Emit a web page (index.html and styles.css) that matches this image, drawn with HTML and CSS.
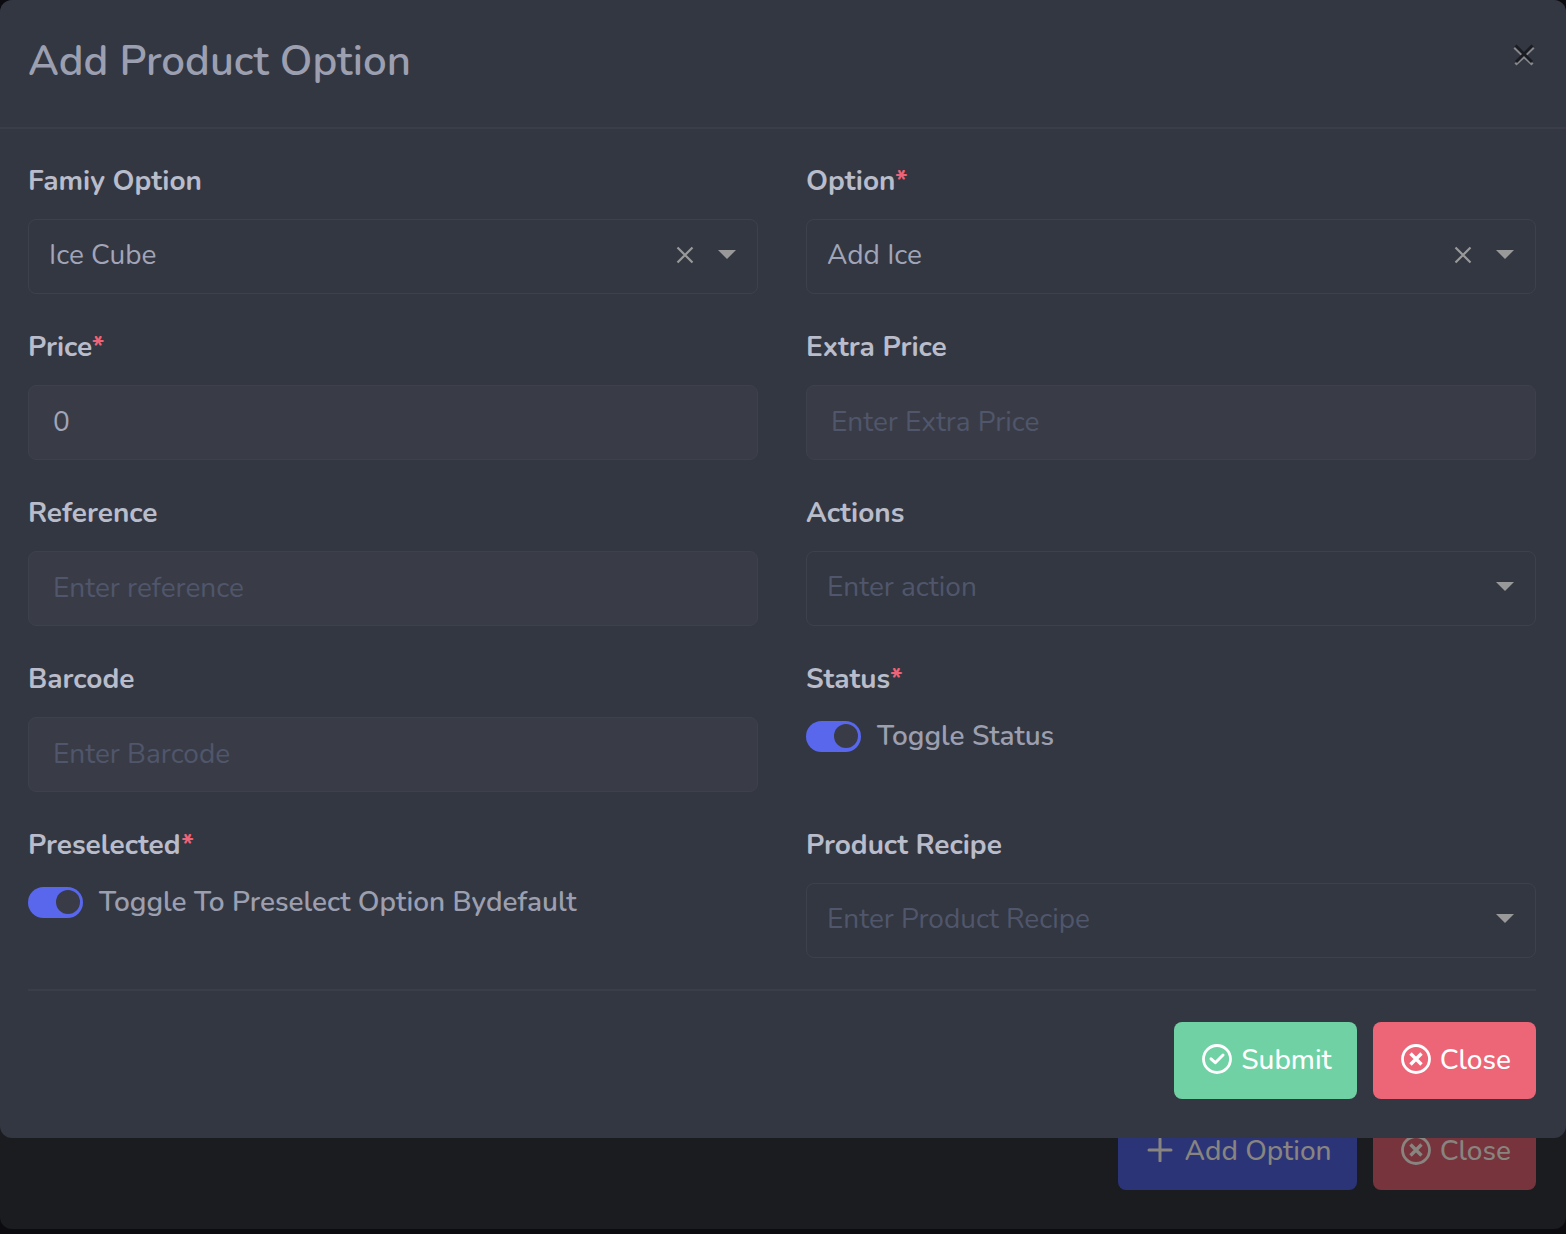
FILE: index.html
```html
<!DOCTYPE html>
<html lang="en">
<head>
<meta charset="utf-8">
<meta name="viewport" content="width=device-width, initial-scale=1">
<title>Add Product Option</title>
<link rel="stylesheet" href="styles.css">
</head>
<body>
<svg class="sprite" aria-hidden="true">
  <symbol id="icon-clear" viewBox="0 0 18 18"><path d="M1.500 1.500 16.500 16.500M16.500 1.500 1.500 16.500" fill="none" stroke="currentColor" stroke-width="2.200"/></symbol>
  <symbol id="icon-caret" viewBox="0 0 18 9"><path d="M0 0H18L9 9Z" fill="currentColor"/></symbol>
  <symbol id="icon-check" viewBox="0 0 30 30"><circle cx="15" cy="15" r="13.500" fill="none" stroke="currentColor" stroke-width="2.800"/><path d="M9 14.800 13.300 18.700 21 11" fill="none" stroke="currentColor" stroke-width="3" stroke-linecap="round" stroke-linejoin="round"/></symbol>
  <symbol id="icon-cross" viewBox="0 0 30 30"><circle cx="15" cy="15" r="13.500" fill="none" stroke="currentColor" stroke-width="2.800"/><path d="M9.500 9.500 20.500 20.500M20.500 9.500 9.500 20.500" fill="none" stroke="currentColor" stroke-width="3.400"/></symbol>
  <symbol id="icon-plus" viewBox="0 0 24 24"><path d="M12 1V23M1 12H23" fill="none" stroke="currentColor" stroke-width="3" stroke-linecap="round"/></symbol>
</svg>

<div class="stage">
  <section class="dialog dialog-back" aria-hidden="true">
    <footer class="actions">
      <button class="btn btn-primary" type="button" tabindex="-1"><svg class="plus"><use href="#icon-plus"/></svg>Add Option</button>
      <button class="btn btn-danger" type="button" tabindex="-1"><svg class="icon"><use href="#icon-cross"/></svg>Close</button>
    </footer>
  </section>

  <section class="dialog dialog-front" role="dialog" aria-labelledby="title">
    <header class="header">
      <h1 class="title" id="title">Add Product Option</h1>
      <button class="dismiss" type="button" aria-label="Close dialog">
        <svg class="dismiss-icon" viewBox="0 0 24 24"><path class="dismiss-glow" d="M2.500 5.500 20.500 22.500M21.500 5.500 3.500 22.500"/><path class="dismiss-mark" d="M3.500 3.500 20 20M20.500 3.500 4 20"/></svg>
      </button>
    </header>

    <form class="form">
      <div class="fields">
        <div class="field">
          <label class="label" for="family">Famiy Option</label>
          <div class="picker">
            <select class="control select" id="family"><option>Ice Cube</option></select>
            <div class="picker-icons">
              <button class="clear" type="button" aria-label="Clear family option"><svg class="clear-icon"><use href="#icon-clear"/></svg></button>
              <svg class="caret"><use href="#icon-caret"/></svg>
            </div>
          </div>
        </div>
        <div class="field">
          <label class="label" for="option">Option<span class="required">*</span></label>
          <div class="picker">
            <select class="control select" id="option"><option>Add Ice</option></select>
            <div class="picker-icons">
              <button class="clear" type="button" aria-label="Clear option"><svg class="clear-icon"><use href="#icon-clear"/></svg></button>
              <svg class="caret"><use href="#icon-caret"/></svg>
            </div>
          </div>
        </div>
        <div class="field">
          <label class="label" for="price">Price<span class="required">*</span></label>
          <input class="control input" id="price" type="text" inputmode="decimal" value="0">
        </div>
        <div class="field">
          <label class="label" for="extra">Extra Price</label>
          <input class="control input" id="extra" type="text" inputmode="decimal" placeholder="Enter Extra Price">
        </div>
        <div class="field">
          <label class="label" for="reference">Reference</label>
          <input class="control input" id="reference" type="text" placeholder="Enter reference">
        </div>
        <div class="field">
          <label class="label" for="actions">Actions</label>
          <div class="picker">
            <select class="control select empty" id="actions"><option value="">Enter action</option></select>
            <div class="picker-icons"><svg class="caret"><use href="#icon-caret"/></svg></div>
          </div>
        </div>
        <div class="field">
          <label class="label" for="barcode">Barcode</label>
          <input class="control input" id="barcode" type="text" placeholder="Enter Barcode">
        </div>
        <div class="field">
          <span class="label">Status<span class="required">*</span></span>
          <label class="toggle"><input class="switch" type="checkbox" role="switch" checked>Toggle Status</label>
        </div>
        <div class="field">
          <span class="label">Preselected<span class="required">*</span></span>
          <label class="toggle"><input class="switch" type="checkbox" role="switch" checked>Toggle To Preselect Option Bydefault</label>
        </div>
        <div class="field">
          <label class="label" for="recipe">Product Recipe</label>
          <div class="picker">
            <select class="control select empty" id="recipe"><option value="">Enter Product Recipe</option></select>
            <div class="picker-icons"><svg class="caret"><use href="#icon-caret"/></svg></div>
          </div>
        </div>
      </div>
      <footer class="actions actions-ruled">
        <button class="btn btn-success" type="submit"><svg class="icon"><use href="#icon-check"/></svg>Submit</button>
        <button class="btn btn-danger" type="button"><svg class="icon"><use href="#icon-cross"/></svg>Close</button>
      </footer>
    </form>
  </section>
</div>
</body>
</html>
```
FILE: styles.css
```css
* {
  box-sizing: border-box;
}

body {
  margin: 0;
  min-height: 100vh;
  background: #0c0c10;
  color: #a1a5b7;
  font-family: Nunito, Lato, "Noto Sans", sans-serif;
  font-size: 28px;
  line-height: 40px;
}

button,
input,
select {
  font: inherit;
  color: inherit;
}

.sprite {
  display: none;
}

/* Both dialogs share one cell, so the front one covers the back one. */
.stage {
  display: grid;
}

.dialog {
  grid-area: 1 / 1;
  min-width: 0;
  border-radius: 12px;
}

.dialog-back {
  display: flex;
  flex-direction: column;
  justify-content: flex-end;
  padding: 0 30px 39px 28px;
  background: #1b1c20;
}

.dialog-front {
  z-index: 1;
  margin-bottom: 91px;
  background: #333741;
}

.header {
  display: flex;
  justify-content: space-between;
  align-items: flex-start;
  padding: 34px 30px 37px 28px;
  border-bottom: 2px solid #3b3e49;
}

.title {
  margin: 0;
  font-size: 42px;
  line-height: 56px;
  font-weight: 600;
  color: #9c9fb0;
}

.dismiss,
.clear {
  display: flex;
  padding: 0;
  border: 0;
  background: none;
  cursor: pointer;
}

.dismiss {
  margin-top: 8px;
}

.dismiss-icon {
  width: 24px;
  height: 24px;
  fill: none;
}

.dismiss-glow {
  stroke: #85878d;
  stroke-width: 3;
}

.dismiss-mark {
  stroke: #1b1c21;
  stroke-width: 3;
}

.form {
  padding: 32px 30px 39px 28px;
}

.fields {
  display: grid;
  grid-template-columns: 1fr 1fr;
  gap: 33px 48px;
}

.field {
  display: flex;
  flex-direction: column;
  gap: 18px;
  min-width: 0;
}

.label {
  font-weight: 700;
  color: #b9bcca;
}

.required {
  color: #ed6478;
}

.control {
  width: 100%;
  height: 75px;
  margin: 0;
  border: 1px solid #3d414c;
  border-radius: 8px;
}

.input {
  padding: 0 24px 2px;
  background: #393c46;
}

.input::placeholder {
  color: #50566b;
  opacity: 1;
}

.picker {
  display: grid;
  align-items: center;
}

.select {
  grid-area: 1 / 1;
  appearance: none;
  padding: 0 100px 4px 20px;
  background: transparent;
}

.empty {
  color: #50566b;
}

.picker-icons {
  grid-area: 1 / 1;
  justify-self: end;
  display: flex;
  align-items: center;
  gap: 24px;
  padding: 0 22px 4px 0;
  color: #999;
  pointer-events: none;
}

.clear {
  pointer-events: auto;
}

.clear-icon {
  width: 18px;
  height: 18px;
}

.caret {
  width: 18px;
  height: 9px;
}

.toggle {
  display: flex;
  align-items: center;
  gap: 16px;
  line-height: 38px;
  font-weight: 600;
  color: #9c9fb0;
}

.switch {
  appearance: none;
  flex: none;
  display: flex;
  justify-content: flex-end;
  align-items: center;
  width: 55px;
  height: 31px;
  margin: 0;
  padding: 3px;
  border-radius: 16px;
  background: #5867eb;
}

.switch::before {
  content: "";
  width: 24px;
  height: 24px;
  border-radius: 50%;
  background: #393c46;
}

.switch:not(:checked) {
  justify-content: flex-start;
  background: #50566b;
}

.actions {
  display: flex;
  justify-content: flex-end;
  gap: 16px;
}

.actions-ruled {
  margin-top: 31px;
  padding-top: 31px;
  border-top: 2px solid #3b3e49;
}

.btn {
  display: flex;
  align-items: center;
  gap: 9px;
  height: 77px;
  padding: 0 25px 2px 28px;
  border: 0;
  border-radius: 8px;
  color: #fff;
  font-weight: 500;
  cursor: pointer;
}

.btn-success {
  background: #70d1a4;
}

.btn-danger {
  background: #ed6678;
}

.btn-primary {
  background: #5867eb;
}

.icon {
  width: 30px;
  height: 30px;
  margin-bottom: 2px;
}

.plus {
  width: 28px;
  height: 24px;
  margin-bottom: 2px;
}

.dialog-back .btn {
  color: #88847f;
}

.dialog-back .btn-primary {
  gap: 11px;
  background: #2c3478;
}

.dialog-back .btn-danger {
  background: #77343d;
}
```
